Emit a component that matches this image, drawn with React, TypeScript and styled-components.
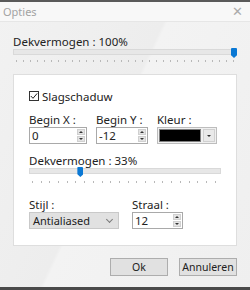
import styled, { createGlobalStyle } from 'styled-components'

const GlobalStyle = createGlobalStyle`
  html, body {
    margin: 0;
    padding: 0;
    width: 250px;
    height: 290px;
    overflow: hidden;
    background: #f0f0f0;
  }
  * {
    box-sizing: border-box;
  }
`

const Window = styled.div`
  display: flex;
  flex-direction: column;
  width: 250px;
  height: 290px;
  border-top: 2px solid #5a5a5a;
  background: linear-gradient(115deg, #f2f2f2 0%, #ededed 45%, #f3f3f3 46%, #efefef 100%);
  font-family: 'Noto Sans', 'Open Sans', sans-serif;
  font-size: 11.5px;
  color: #222;
`

const TitleBar = styled.div`
  display: flex;
  justify-content: space-between;
  align-items: center;
  flex-shrink: 0;
  height: 20px;
  padding: 0 7px 0 3px;
  background: #f8f8f8;
  border-bottom: 1px solid #e6e6e6;
  color: #a3a3a3;
  font-size: 11px;
`

const CloseGlyph = styled.span`
  font-size: 13px;
  color: #ababab;
  line-height: 1;
`

const Body = styled.div`
  flex: 1;
  display: flex;
  flex-direction: column;
  padding: 13px 13px 0 13px;
`

const Label = styled.div`
  height: 14px;
  font-size: 11.5px;
  line-height: 14px;
  color: #222;
  white-space: nowrap;
`

const SliderWrap = styled.div<{ $width: number; $height: number }>`
  position: relative;
  flex-shrink: 0;
  width: ${({ $width }) => $width}px;
  height: ${({ $height }) => $height}px;
`

const Track = styled.div`
  position: absolute;
  left: 0;
  right: 0;
  top: 0;
  height: 6px;
  background: #e7e7e7;
  border: 1px solid #d9d9d9;
`

const Ticks = styled.div<{ $step: number; $top: number }>`
  position: absolute;
  left: 3px;
  right: 2px;
  top: ${({ $top }) => $top}px;
  height: 2px;
  background: repeating-linear-gradient(
    to right,
    #b8b8b8 0,
    #b8b8b8 1px,
    transparent 1px,
    transparent ${({ $step }) => $step}px
  );
`

const Thumb = styled.div`
  position: absolute;
  top: -1px;
  width: 6px;
  height: 10px;
  margin-left: -3px;
  background: #0a78d4;
  border-radius: 1px 1px 0 0;
  clip-path: polygon(0 0, 100% 0, 100% 72%, 50% 100%, 0 72%);
`

interface SliderProps {
  value: number
  width: number
  step: number
  tickTop: number
  height: number
}

const Slider = ({ value, width, step, tickTop, height }: SliderProps) => (
  <SliderWrap $width={width} $height={height}>
    <Track />
    <Ticks $step={step} $top={tickTop} />
    <Thumb style={{ left: `${3 + (value / 100) * (width - 6)}px` }} />
  </SliderWrap>
)

const GroupBox = styled.div`
  display: flex;
  flex-direction: column;
  flex-shrink: 0;
  margin-top: 11px;
  height: 172px;
  padding: 14px 15px 0 15px;
  background: #ffffff;
  border: 1px solid #dedede;
`

const CheckRow = styled.label`
  display: flex;
  align-items: center;
  gap: 3px;
  height: 14px;
`

const CheckBox = styled.span`
  display: inline-flex;
  align-items: center;
  justify-content: center;
  width: 10px;
  height: 10px;
  border: 1px solid #333;
  background: #fff;
`

const FieldRow = styled.div<{ $gap: number; $top: number }>`
  display: flex;
  gap: ${({ $gap }) => $gap}px;
  margin-top: ${({ $top }) => $top}px;
`

const Field = styled.div<{ $width: number }>`
  display: flex;
  flex-direction: column;
  width: ${({ $width }) => $width}px;
`

const SpinBox = styled.div`
  display: flex;
  height: 17px;
  border: 1px solid #a9a9a9;
  background: #fff;
`

const SpinValue = styled.div`
  flex: 1;
  padding-left: 2px;
  line-height: 15px;
`

const SpinButtons = styled.div`
  display: flex;
  flex-direction: column;
  width: 8px;
  margin: 1px;
  gap: 1px;
`

const SpinButton = styled.div`
  flex: 1;
  display: flex;
  align-items: center;
  justify-content: center;
  background: #e4e4e4;
  border: 1px solid #d0d0d0;
`

const Arrow = styled.span<{ $up?: boolean }>`
  width: 0;
  height: 0;
  border-left: 2px solid transparent;
  border-right: 2px solid transparent;
  ${({ $up }) => ($up ? 'border-bottom: 2px solid #333;' : 'border-top: 2px solid #333;')}
`

const Spin = ({ value }: { value: string }) => (
  <SpinBox>
    <SpinValue>{value}</SpinValue>
    <SpinButtons>
      <SpinButton>
        <Arrow $up />
      </SpinButton>
      <SpinButton>
        <Arrow />
      </SpinButton>
    </SpinButtons>
  </SpinBox>
)

const ColorCombo = styled.div`
  display: flex;
  height: 17px;
  padding: 1px;
  gap: 2px;
  border: 1px solid #bdbdbd;
  background: #f0f0f0;
`

const Swatch = styled.div`
  flex: 1;
  background: #000;
  border: 1px solid #808080;
`

const ComboButton = styled.div`
  display: flex;
  align-items: center;
  justify-content: center;
  width: 12px;
  background: #e9e9e9;
  border: 1px solid #d0d0d0;
`

const SubSection = styled.div`
  display: flex;
  flex-direction: column;
  margin-top: 10px;
`

const Select = styled.div`
  display: flex;
  align-items: center;
  justify-content: space-between;
  height: 17px;
  padding: 0 6px 0 3px;
  background: #e1e1e1;
  border: 1px solid #c9c9c9;
  font-size: 11px;
`

const Chevron = styled.span`
  width: 5px;
  height: 5px;
  margin-top: -3px;
  border-right: 1px solid #7a7a7a;
  border-bottom: 1px solid #7a7a7a;
  transform: rotate(45deg);
`

const ButtonRow = styled.div`
  display: flex;
  justify-content: flex-end;
  gap: 11px;
  margin-top: 12px;
`

const Button = styled.button`
  width: 58px;
  height: 18px;
  padding: 0;
  background: #e1e1e1;
  border: 1px solid #adadad;
  font-family: 'Noto Sans', 'Open Sans', sans-serif;
  font-size: 10.5px;
  line-height: 16px;
  color: #222;
`

const Taskbar = styled.div`
  flex-shrink: 0;
  height: 3px;
  background: #4a4a4a;
`

export default function App() {
  return (
    <>
      <GlobalStyle />
      <Window>
        <TitleBar>
          <span>Opties</span>
          <CloseGlyph>✕</CloseGlyph>
        </TitleBar>
        <Body>
          <Label>Dekvermogen : 100%</Label>
          <Slider value={100} width={224} step={7} tickTop={11} height={14} />
          <GroupBox>
            <CheckRow>
              <CheckBox>
                <svg width="8" height="8" viewBox="0 0 8 8">
                  <path d="M0.8 4 L3 6.3 L7.2 1.4" fill="none" stroke="#222" strokeWidth="1" />
                </svg>
              </CheckBox>
              Slagschaduw
            </CheckRow>
            <FieldRow $gap={9} $top={10}>
              <Field $width={58}>
                <Label>Begin X :</Label>
                <Spin value="0" />
              </Field>
              <Field $width={52}>
                <Label>Begin Y :</Label>
                <Spin value="-12" />
              </Field>
              <Field $width={60}>
                <Label>Kleur :</Label>
                <ColorCombo>
                  <Swatch />
                  <ComboButton>
                    <Arrow />
                  </ComboButton>
                </ColorCombo>
              </Field>
            </FieldRow>
            <SubSection>
              <Label>Dekvermogen : 33%</Label>
              <Slider value={26} width={192} step={8.7} tickTop={13} height={16} />
            </SubSection>
            <FieldRow $gap={13} $top={14}>
              <Field $width={90}>
                <Label>Stijl :</Label>
                <Select>
                  Antialiased
                  <Chevron />
                </Select>
              </Field>
              <Field $width={51}>
                <Label>Straal :</Label>
                <Spin value="12" />
              </Field>
            </FieldRow>
          </GroupBox>
          <ButtonRow>
            <Button>Ok</Button>
            <Button>Annuleren</Button>
          </ButtonRow>
        </Body>
        <Taskbar />
      </Window>
    </>
  )
}
